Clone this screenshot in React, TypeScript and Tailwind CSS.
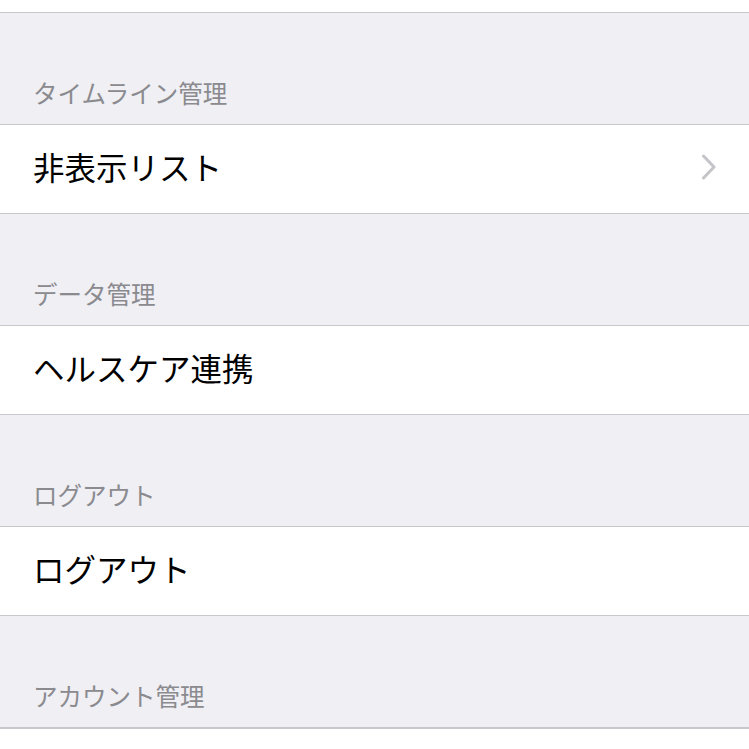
type Section = {
  title: string;
  row?: { label: string; chevron?: boolean };
};

const sections: Section[] = [
  { title: "タイムライン管理", row: { label: "非表示リスト", chevron: true } },
  { title: "データ管理", row: { label: "ヘルスケア連携" } },
  { title: "ログアウト", row: { label: "ログアウト" } },
  { title: "アカウント管理" },
];

function Chevron() {
  return (
    <svg width="16" height="26" viewBox="0 0 16 26" fill="none">
      <polyline
        points="2.5,2 13,13 2.5,24"
        stroke="#c4c4c9"
        strokeWidth="3"
        strokeLinecap="round"
        strokeLinejoin="round"
      />
    </svg>
  );
}

export default function App() {
  return (
    <main
      className="min-h-screen bg-white"
      style={{ fontFamily: '"Noto Sans CJK JP", "Noto Sans", sans-serif' }}
    >
      <div className="h-[13px] bg-white border-b border-[#c8c7cc]" />

      {sections.map((s) => (
        <section key={s.title}>
          <div className="h-[111px] bg-[#efeff4] flex items-end px-[33px] pb-[17px]">
            <span className="text-[24.5px] leading-[28px] text-[#8a8a8f]">{s.title}</span>
          </div>
          <div className="border-y border-[#c8c7cc] bg-white">
            {s.row && (
              <div className="h-[88px] flex items-center justify-between pl-[33px] pr-[32px] pb-[4px]">
                <span className="text-[31.5px] leading-none text-black">{s.row.label}</span>
                {s.row.chevron && <Chevron />}
              </div>
            )}
          </div>
        </section>
      ))}
    </main>
  );
}
